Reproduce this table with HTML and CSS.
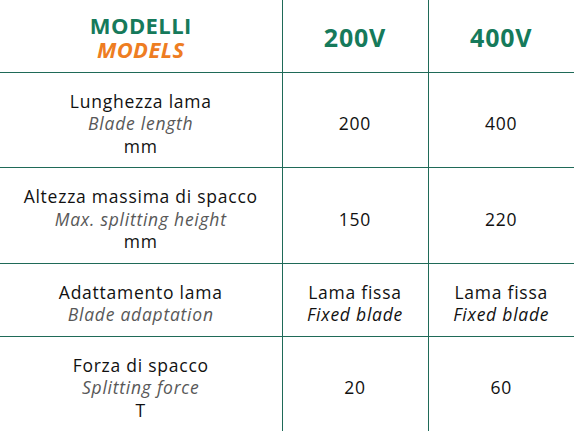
FILE: index.html
```html
<!DOCTYPE html>
<html lang="it">
<head>
    <meta charset="UTF-8">
    <meta name="viewport" content="width=device-width, initial-scale=1.0">
    <title>Modelli | Models</title>
    <link rel="stylesheet" href="styles.css">
</head>
<body>
    <table class="spec-table">
        <colgroup>
            <col class="col-label">
            <col class="col-model">
            <col class="col-model">
        </colgroup>
        <thead>
            <tr class="head-row">
                <th class="models-head">
                    <span class="it">MODELLI</span>
                    <span class="en">MODELS</span>
                </th>
                <th class="model-name">200V</th>
                <th class="model-name">400V</th>
            </tr>
        </thead>
        <tbody>
            <tr>
                <td>Lunghezza lama<br><em>Blade length</em><br>mm</td>
                <td>200</td>
                <td>400</td>
            </tr>
            <tr>
                <td>Altezza massima di spacco<br><em>Max. splitting height</em><br>mm</td>
                <td>150</td>
                <td>220</td>
            </tr>
            <tr>
                <td>Adattamento lama<br><em>Blade adaptation</em></td>
                <td>Lama fissa<br><em class="dark">Fixed blade</em></td>
                <td>Lama fissa<br><em class="dark">Fixed blade</em></td>
            </tr>
            <tr>
                <td>Forza di spacco<br><em>Splitting force</em><br>T</td>
                <td>20</td>
                <td>60</td>
            </tr>
        </tbody>
    </table>
</body>
</html>
```

FILE: styles.css
```css
:root {
    --green: #167a5b;
    --orange: #ee7d22;
    --line: #1f6a58;
    --text: #111111;
    --muted: #585858;
}

body {
    margin: 0;
    background: #ffffff;
    font-family: 'Open Sans', 'DejaVu Sans', sans-serif;
    color: var(--text);
}

.spec-table {
    width: 573px;
    border-collapse: collapse;
    table-layout: fixed;
}

.col-label {
    width: 282px;
}

.col-model {
    width: 146px;
}

.spec-table th,
.spec-table td {
    text-align: center;
    vertical-align: middle;
    font-size: 17.5px;
    font-weight: 500;
    letter-spacing: 0.75px;
    line-height: 22.5px;
    padding: 17px 2px 10px;
    border-top: 1px solid var(--line);
    border-left: 1px solid var(--line);
}

.spec-table th:first-child,
.spec-table td:first-child {
    border-left: none;
}

.head-row th {
    border-top: none;
    height: 72px;
    padding: 3px 2px 0;
    box-sizing: border-box;
}

.models-head span {
    display: block;
    font-size: 22px;
    line-height: 24px;
    font-weight: 700;
    letter-spacing: 0.4px;
}

.models-head .it {
    color: var(--green);
}

.models-head .en {
    color: var(--orange);
    font-style: italic;
}

.spec-table .model-name {
    color: var(--green);
    font-size: 25px;
    font-weight: 700;
    letter-spacing: 0.8px;
}

.spec-table em {
    color: var(--muted);
}

.spec-table em.dark {
    color: var(--text);
}
```
